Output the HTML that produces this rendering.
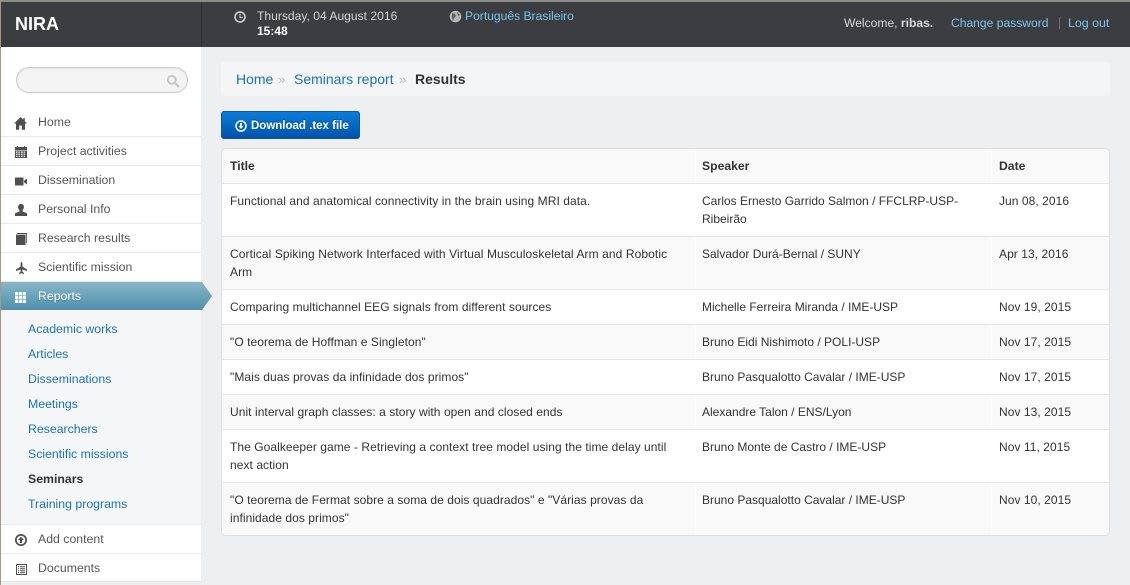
<!DOCTYPE html>
<html><head><meta charset="utf-8"><style>
*{box-sizing:border-box}
html,body{margin:0;padding:0;width:1130px;height:585px;overflow:hidden;background:#eeeff1;font-family:"Liberation Sans",sans-serif;font-size:12px;color:#333}
.a{position:absolute;white-space:nowrap}
a{color:#1a73b5;text-decoration:none}
#top{position:absolute;left:0;top:0;width:1130px;height:47px;background:#3b3d40;border-top:2px solid #8c8c88}
#side{position:absolute;left:1px;top:47px;width:200px;height:535px;background:#fff}
#edge{position:absolute;left:0;top:0;width:1px;height:585px;background:#a39a80}
.m{position:absolute;left:1px;width:200px;height:29px;border-bottom:1px solid #e9e9e9;background:#fff;color:#555;font-size:12.3px}
.m span{position:absolute;left:37px;top:6px;line-height:16px}
.i{position:absolute;fill:#4f4f4f;z-index:3}
.s{position:absolute;left:28px;line-height:16px;color:#1a73b5;font-size:12.3px}
.r{position:absolute;left:222px;width:887px;border-bottom:1px solid #e6e6e6;background:#fff;line-height:18px;letter-spacing:.06px}
.r.o{background:#f9f9f9}
.r.o:before,.r.o:after{content:"";position:absolute;top:0;bottom:0;width:1px;background:rgba(255,255,255,.6)}
.r.o:before{left:473px}.r.o:after{left:769px}
.r div{position:absolute;top:8px}
.t{left:8px;width:455px}.p{left:480px;width:280px;letter-spacing:0}.d{left:777px}
</style></head><body>
<div id="top"></div>
<div class="a" style="left:201px;top:2px;width:1px;height:45px;background:#2f3134"></div>
<div class="a" style="left:15px;top:14px;font-size:18px;line-height:20px;font-weight:bold;color:#fff">NIRA</div>
<svg class="a" style="left:234px;top:11px" width="12" height="12" viewBox="0 0 12 12"><circle cx="6" cy="6" r="5" fill="none" stroke="#c8c8c8" stroke-width="1.700"/><path d="M6 2.800V6.500H8.800" fill="none" stroke="#c8c8c8" stroke-width="1.200"/></svg>
<div class="a" style="left:257px;top:8px;line-height:16px;color:#d4d4d4;font-size:12.100px">Thursday, 04 August 2016</div>
<div class="a" style="left:257px;top:23px;line-height:16px;color:#fff;font-weight:bold">15:48</div>
<svg class="a" style="left:449px;top:10px" width="13" height="13" viewBox="0 0 13 13"><circle cx="6.500" cy="6.500" r="5.800" fill="#b5b5b5"/><path d="M3 3l3 1 1 2-2 2-1 3-1-3zM8 2l3 3-2 1z" fill="#5d5f61"/></svg>
<div class="a" style="left:465px;top:8px;line-height:16px;color:#7cc5ee;font-size:12.100px">Português Brasileiro</div>
<div class="a" style="left:844px;top:15px;line-height:16px;color:#d8d8d8;font-size:12.100px">Welcome, <b>ribas.</b></div>
<div class="a" style="left:951px;top:15px;line-height:16px;color:#7cc5ee;font-size:12.100px">Change password</div>
<div class="a" style="left:1059px;top:17px;width:1px;height:12px;background:#6a6c6e"></div>
<div class="a" style="left:1068px;top:15px;line-height:16px;color:#7cc5ee;font-size:12.400px">Log out</div>

<div id="side"></div><div id="edge"></div>
<div class="a" style="left:16px;top:67px;width:172px;height:26px;border:1px solid #ccc;border-radius:13px;background:#f4f4f4;box-shadow:inset 0 1px 2px rgba(0,0,0,.06)"></div>
<svg class="a" style="left:166px;top:74px" width="14" height="14" viewBox="0 0 14 14"><circle cx="5.800" cy="5.800" r="4" fill="none" stroke="#c4c4c4" stroke-width="1.800"/><path d="M9 9l4 4" stroke="#c4c4c4" stroke-width="2.200"/></svg>

<div class="m" style="top:108px"><span>Home</span></div>
<div class="m" style="top:137px"><span>Project activities</span></div>
<div class="m" style="top:166px"><span>Dissemination</span></div>
<div class="m" style="top:195px"><span>Personal Info</span></div>
<div class="m" style="top:224px"><span>Research results</span></div>
<div class="m" style="top:253px"><span>Scientific mission</span></div>
<svg class="i" style="left:14px;top:117px" width="13" height="13" viewBox="0 0 13 13"><path d="M6.500 0L0 6.500H2V12.800H5.200V8.500H7.800V12.800H11V6.500H13L10.800 4.300V1H9.300V2.800Z"/></svg>
<svg class="i" style="left:15px;top:146px" width="12" height="12" viewBox="0 0 12 12"><path d="M0 1h2V0h1v1h6V0h1v1h2v3H0z"/><path fill-rule="evenodd" d="M0 4.500h12V12H0zM1 5.500v1.200h1.600V5.500zM3.500 5.500v1.200h1.600V5.500zM6 5.500v1.200h1.600V5.500zM8.500 5.500v1.200h1.600V5.500zM1 7.600v1.200h1.600V7.600zM3.500 7.600v1.200h1.600V7.600zM6 7.600v1.200h1.600V7.600zM8.500 7.600v1.200h1.600V7.600zM1 9.700v1.200h1.600V9.700zM3.500 9.700v1.200h1.600V9.700zM6 9.700v1.200h1.600V9.700zM8.500 9.700v1.200h1.600V9.700z"/></svg>
<svg class="i" style="left:15px;top:177px" width="12" height="9" viewBox="0 0 12 9"><path d="M0 0.500h8.500v8H0zM9 3.800L12 1.500v6L9 5.200z"/></svg>
<svg class="i" style="left:15px;top:204px" width="12" height="12" viewBox="0 0 12 12"><path d="M6 0c1.900 0 2.900 1.300 2.900 3 0 1.400-.6 2.600-1.300 3.300v1.200L12 9.300V12H0V9.300l4.400-1.800V6.300C3.700 5.600 3.100 4.400 3.100 3 3.100 1.300 4.100 0 6 0z"/></svg>
<svg class="i" style="left:16px;top:233px" width="11" height="12" viewBox="0 0 11 12"><path d="M0 1L1.500 0H11v10l-.8.500V1H1.500zM0 1.600h9.500V12H0z"/></svg>
<svg class="i" style="left:16px;top:262px" width="11" height="12" viewBox="0 0 11 12"><path d="M5.500 0c.6 0 .9.800.9 1.800V4.500L11 7.500V9L6.400 7.500V9.800L8 11v1L5.500 11.300 3 12V11L4.600 9.800V7.500L0 9V7.500L4.600 4.500V1.800C4.600.8 4.900 0 5.500 0z"/></svg>

<div class="a" style="left:1px;top:282px;width:211px;height:28px;background:linear-gradient(#88b6c8,#4f90ad);clip-path:polygon(0 0,201px 0,211px 50%,201px 100%,0 100%)"></div>
<svg class="a" style="left:15px;top:292px" width="11" height="11" viewBox="0 0 11 11" fill="#fff"><path d="M0 0h3.200v3.200H0zM3.900 0h3.200v3.200H3.900zM7.800 0h3.200v3.200H7.800zM0 3.900h3.200v3.200H0zM3.900 3.900h3.200v3.200H3.900zM7.800 3.900h3.200v3.200H7.800zM0 7.800h3.200V11H0zM3.900 7.800h3.200V11H3.900zM7.800 7.800h3.200V11H7.800z"/></svg>
<div class="a" style="left:38px;top:288px;line-height:16px;color:#fff;text-shadow:0 1px 1px rgba(0,0,0,.2);font-size:12.300px">Reports</div>

<div class="a" style="left:1px;top:310px;width:200px;height:215px;background:#f5f6f8;border-bottom:1px solid #e9e9e9"></div>
<div class="s" style="top:321px">Academic works</div>
<div class="s" style="top:346px">Articles</div>
<div class="s" style="top:371px">Disseminations</div>
<div class="s" style="top:396px">Meetings</div>
<div class="s" style="top:421px">Researchers</div>
<div class="s" style="top:446px">Scientific missions</div>
<div class="s" style="top:471px;color:#333;font-weight:bold">Seminars</div>
<div class="s" style="top:496px">Training programs</div>

<div class="m" style="top:525px"><span>Add content</span></div>
<div class="m" style="top:554px;height:28px"><span>Documents</span></div>
<svg class="i" style="left:15px;top:534px" width="12" height="12" viewBox="0 0 12 12"><path fill-rule="evenodd" d="M6 0a6 6 0 1 1 0 12A6 6 0 0 1 6 0zM6 1.700a4.300 4.300 0 1 0 0 8.600A4.300 4.300 0 0 0 6 1.700zM6 2.800L9 6H7.200V9H4.800V6H3z"/></svg>
<svg class="i" style="left:16px;top:564px" width="11" height="11" viewBox="0 0 11 11"><path fill-rule="evenodd" d="M0 0h11v11H0zM1 1v9h9V1z"/><path d="M2 2.300h1v1H2zM4 2.300h5v1H4zM2 4.300h1v1H2zM4 4.300h5v1H4zM2 6.200h1v1H2zM4 6.200h5v1H4zM2 8.100h1v1H2zM4 8.100h5v1H4z"/></svg>

<div class="a" style="left:221px;top:62px;width:889px;height:34px;background:#f4f5f6;border-radius:3px"></div>
<div class="a" style="left:236px;top:70px;font-size:14px;line-height:18px"><a>Home</a></div>
<div class="a" style="left:278px;top:71px;font-size:13px;line-height:18px;color:#bbb">»</div>
<div class="a" style="left:294px;top:70px;font-size:14px;line-height:18px"><a>Seminars report</a></div>
<div class="a" style="left:399px;top:71px;font-size:13px;line-height:18px;color:#bbb">»</div>
<div class="a" style="left:415px;top:70px;font-size:14px;line-height:18px;font-weight:bold;color:#333">Results</div>

<div class="a" style="left:221px;top:111px;width:139px;height:28px;border-radius:3px;background:linear-gradient(#0a7dd8,#0052ac);border:1px solid #0a58a8"></div>
<svg class="a" style="left:235px;top:120px" width="12" height="12" viewBox="0 0 12 12"><circle cx="6" cy="6" r="5" fill="none" stroke="#fff" stroke-width="1.500"/><path d="M5 3h2v3h1.500L6 9 3.500 6H5z" fill="#fff"/></svg>
<div class="a" style="left:251px;top:118px;line-height:16px;color:#fff;font-weight:bold;font-size:11.500px;text-shadow:0 -1px 0 rgba(0,0,0,.25)">Download .tex file</div>

<div class="a" style="left:221px;top:148px;width:889px;height:388px;background:#fff;border:1px solid #dfdfdf;border-radius:5px"></div>
<div class="r o" style="top:149px;height:35px;border-radius:5px 5px 0 0;font-weight:bold;color:#333;letter-spacing:0;font-size:12.200px"><div class="t">Title</div><div class="p">Speaker</div><div class="d">Date</div></div>
<div class="r" style="top:184px;height:53px"><div class="t">Functional and anatomical connectivity in the brain using MRI data.</div><div class="p">Carlos Ernesto Garrido Salmon / FFCLRP-USP-Ribeirão</div><div class="d">Jun 08, 2016</div></div>
<div class="r o" style="top:237px;height:53px"><div class="t" style="letter-spacing:.09px">Cortical Spiking Network Interfaced with Virtual Musculoskeletal Arm and Robotic Arm</div><div class="p">Salvador Durá-Bernal / SUNY</div><div class="d">Apr 13, 2016</div></div>
<div class="r" style="top:290px;height:35px"><div class="t">Comparing multichannel EEG signals from different sources</div><div class="p">Michelle Ferreira Miranda / IME-USP</div><div class="d">Nov 19, 2015</div></div>
<div class="r o" style="top:325px;height:35px"><div class="t">"O teorema de Hoffman e Singleton"</div><div class="p">Bruno Eidi Nishimoto / POLI-USP</div><div class="d">Nov 17, 2015</div></div>
<div class="r" style="top:360px;height:35px"><div class="t">"Mais duas provas da infinidade dos primos"</div><div class="p">Bruno Pasqualotto Cavalar / IME-USP</div><div class="d">Nov 17, 2015</div></div>
<div class="r o" style="top:395px;height:35px"><div class="t">Unit interval graph classes: a story with open and closed ends</div><div class="p">Alexandre Talon / ENS/Lyon</div><div class="d">Nov 13, 2015</div></div>
<div class="r" style="top:430px;height:53px"><div class="t">The Goalkeeper game - Retrieving a context tree model using the time delay until next action</div><div class="p">Bruno Monte de Castro / IME-USP</div><div class="d">Nov 11, 2015</div></div>
<div class="r o" style="top:483px;height:52px;border-bottom:0;border-radius:0 0 5px 5px"><div class="t">"O teorema de Fermat sobre a soma de dois quadrados" e "Várias provas da infinidade dos primos"</div><div class="p">Bruno Pasqualotto Cavalar / IME-USP</div><div class="d">Nov 10, 2015</div></div>
</body></html>
